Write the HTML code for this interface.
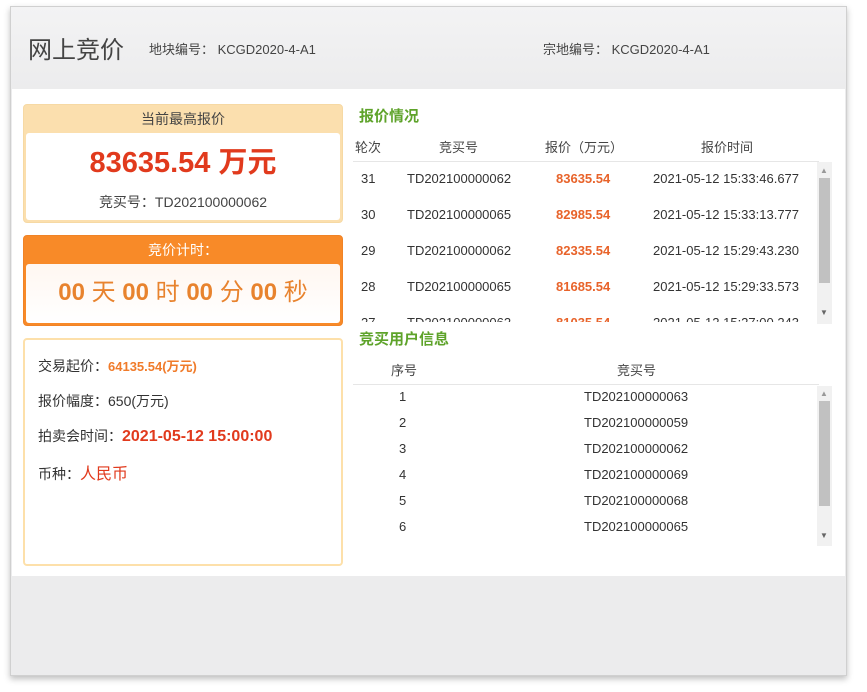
<!DOCTYPE html>
<html><head><meta charset="utf-8"><style>
*{margin:0;padding:0;box-sizing:border-box}
body{width:867px;height:692px;background:#fff;font-family:"Liberation Sans","Noto Sans CJK SC",sans-serif;color:#333;position:relative;overflow:hidden;font-size:13px}
.abs{position:absolute}
.outer{left:10px;top:6px;width:837px;height:670px;border:1px solid #d0d0d0;background:#ececed;box-shadow:0 3px 6px rgba(0,0,0,.25)}
.body{left:12px;top:89px;width:833px;height:487px;background:#fff}
.box{border-radius:4px;overflow:hidden}
.sb{background:#f1f1f1}
.th{position:absolute;background:#c1c1c1}
.green{color:#5ea32a;font-weight:bold;font-size:15px}
.row{position:absolute;left:0;width:100%;height:20px;font-size:13px;color:#333}
.row span{position:absolute}
</style></head><body>
<div class="abs outer"></div>
<div class="abs" style="left:11px;top:7px;width:835px;height:81px;background:linear-gradient(#f3f3f4,#ececed)"></div>
<div class="abs" style="left:28px;top:30px;font-size:24px;color:#444">网上竞价</div>
<div class="abs" style="left:149px;top:39px;font-size:13px;color:#444">地块编号： KCGD2020-4-A1</div>
<div class="abs" style="left:543px;top:39px;font-size:13px;color:#444">宗地编号： KCGD2020-4-A1</div>
<div class="abs body"></div>

<div class="abs box" style="left:23px;top:104px;width:320px;height:119px;background:#fbdfae;border:1px solid #f6d9a4">
 <div style="height:28px;text-align:center;line-height:28px;font-size:14px;color:#444">当前最高报价</div>
 <div style="position:absolute;left:2px;top:28px;right:2px;bottom:2px;background:#fff;border-radius:3px;text-align:center">
  <div style="font-size:29px;font-weight:bold;color:#e13a1d;margin-top:13px;line-height:34px">83635.54 万元</div>
  <div style="font-size:14px;color:#444;margin-top:12px">竞买号：TD202100000062</div>
 </div>
</div>
<div class="abs box" style="left:23px;top:235px;width:320px;height:91px;background:#f88a28;border:1px solid #f08326">
 <div style="height:28px;text-align:center;line-height:28px;font-size:14px;color:#fff">竞价计时：</div>
 <div style="position:absolute;left:2px;top:28px;right:2px;bottom:2px;background:linear-gradient(#fff7f1,#fff);border-radius:3px;text-align:center;font-size:24px;line-height:58px;color:#e8832e">
  <b>00</b> 天 <b>00</b> 时 <b>00</b> 分 <b>00</b> 秒</div>
</div>
<div class="abs box" style="left:23px;top:338px;width:320px;height:228px;border:2px solid #fde0aa">
 <div style="position:absolute;left:13px;top:16px;font-size:14px;color:#333">交易起价：<b style="color:#f07b2a;font-size:13px">64135.54(万元)</b></div>
 <div style="position:absolute;left:13px;top:51px;font-size:14px;color:#333">报价幅度：650(万元)</div>
 <div style="position:absolute;left:13px;top:86px;font-size:14px;color:#333">拍卖会时间：<b style="color:#e13a1d;font-size:16px">2021-05-12 15:00:00</b></div>
 <div style="position:absolute;left:13px;top:120px;font-size:14px;color:#333">币种：<span style="color:#e13a1d;font-size:16px">人民币</span></div>
</div>

<div class="abs green" style="left:359px;top:105px">报价情况</div>
<div class="abs" style="left:353px;top:137px;width:480px;font-size:13px;color:#444">
 <span class="abs" style="left:2px">轮次</span><span class="abs" style="left:86px">竞买号</span><span class="abs" style="left:192px">报价（万元）</span><span class="abs" style="left:348px">报价时间</span>
</div>
<div class="abs" style="left:353px;top:161px;width:466px;height:1px;background:#e6e6e6"></div>
<div class="abs" style="left:353px;top:162px;width:464px;height:160px;overflow:hidden">
 <div class="row" style="top:9px"><span style="left:8px">31</span><span style="left:54px">TD202100000062</span><span style="left:203px;color:#e8632a;font-weight:bold">83635.54</span><span style="left:300px">2021-05-12 15:33:46.677</span></div>
 <div class="row" style="top:45px"><span style="left:8px">30</span><span style="left:54px">TD202100000065</span><span style="left:203px;color:#e8632a;font-weight:bold">82985.54</span><span style="left:300px">2021-05-12 15:33:13.777</span></div>
 <div class="row" style="top:81px"><span style="left:8px">29</span><span style="left:54px">TD202100000062</span><span style="left:203px;color:#e8632a;font-weight:bold">82335.54</span><span style="left:300px">2021-05-12 15:29:43.230</span></div>
 <div class="row" style="top:117px"><span style="left:8px">28</span><span style="left:54px">TD202100000065</span><span style="left:203px;color:#e8632a;font-weight:bold">81685.54</span><span style="left:300px">2021-05-12 15:29:33.573</span></div>
 <div class="row" style="top:153px"><span style="left:8px">27</span><span style="left:54px">TD202100000062</span><span style="left:203px;color:#e8632a;font-weight:bold">81035.54</span><span style="left:300px">2021-05-12 15:27:00.243</span></div>
</div>
<div class="abs sb" style="left:817px;top:162px;width:15px;height:162px"></div>
<div class="th" style="left:819px;top:178px;width:11px;height:105px"></div>
<div class="abs" style="left:820px;top:166px;font-size:8px;color:#999">▲</div>
<div class="abs" style="left:820px;top:308px;font-size:8px;color:#666">▼</div>

<div class="abs green" style="left:359px;top:328px">竞买用户信息</div>
<div class="abs" style="left:353px;top:360px;width:480px;font-size:13px;color:#444">
 <span class="abs" style="left:38px">序号</span><span class="abs" style="left:264px">竞买号</span>
</div>
<div class="abs" style="left:353px;top:384px;width:466px;height:1px;background:#e6e6e6"></div>
<div class="abs" style="left:353px;top:386px;width:464px;height:160px;font-size:13px">
 <div class="row" style="top:3px"><span style="left:46px">1</span><span style="left:231px">TD202100000063</span></div>
 <div class="row" style="top:29px"><span style="left:46px">2</span><span style="left:231px">TD202100000059</span></div>
 <div class="row" style="top:55px"><span style="left:46px">3</span><span style="left:231px">TD202100000062</span></div>
 <div class="row" style="top:81px"><span style="left:46px">4</span><span style="left:231px">TD202100000069</span></div>
 <div class="row" style="top:107px"><span style="left:46px">5</span><span style="left:231px">TD202100000068</span></div>
 <div class="row" style="top:133px"><span style="left:46px">6</span><span style="left:231px">TD202100000065</span></div>
</div>
<div class="abs sb" style="left:817px;top:386px;width:15px;height:160px"></div>
<div class="th" style="left:819px;top:401px;width:11px;height:105px"></div>
<div class="abs" style="left:820px;top:389px;font-size:8px;color:#999">▲</div>
<div class="abs" style="left:820px;top:531px;font-size:8px;color:#666">▼</div>
</body></html>
